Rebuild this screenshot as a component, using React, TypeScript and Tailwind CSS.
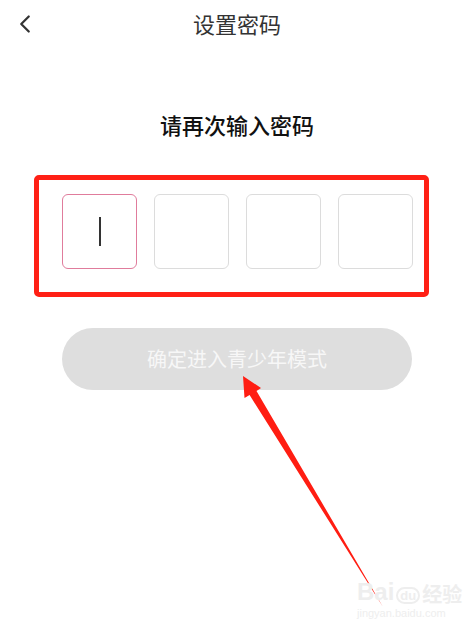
import { ChevronLeft } from "lucide-react";

const cjk = "font-['PingFang_SC','Noto_Sans_CJK_SC',sans-serif]";

const App = () => {
  const cells = [0, 1, 2, 3];

  return (
    <div className={`relative h-[632px] w-[474px] overflow-hidden bg-white ${cjk}`}>
      {/* Header */}
      <div className="relative flex h-[50px] items-center justify-center pb-[4px]">
        <ChevronLeft
          className="absolute left-[10px] top-[9px] h-[30px] w-[30px] text-[#333]"
          strokeWidth={1.8}
        />
        <span className="text-[22px] leading-[30px] text-[#333]">设置密码</span>
      </div>

      {/* Prompt */}
      <div className="mt-[59px] text-center text-[22px] font-medium leading-[30px] text-[#111]">
        请再次输入密码
      </div>

      {/* Code cells, highlighted */}
      <div className="ml-[34px] mt-[36px] w-[395px] rounded-[5px] border-[5px] border-[#ff2015] pb-[23px] pl-[23px] pt-[14px]">
        <div className="flex gap-[17px]">
          {cells.map((i) => (
            <div
              key={i}
              className={`flex h-[75px] w-[75px] items-center justify-center rounded-[6px] border ${
                i === 0 ? "border-[#e07c9c]" : "border-[#dcdcdc]"
              }`}
            >
              {i === 0 && <div className="h-[29px] w-[2px] bg-[#333]" />}
            </div>
          ))}
        </div>
      </div>

      {/* Confirm button */}
      <button
        type="button"
        className="ml-[62px] mt-[31px] flex h-[62px] w-[350px] items-center justify-center rounded-full bg-[#dedede] text-[20px] text-[#f7f7f7]"
      >
        确定进入青少年模式
      </button>

      {/* Annotation arrow */}
      <svg className="absolute left-0 top-0" width="474" height="632" viewBox="0 0 474 632">
        <polygon
          points="243,376 261,388 256.5,391 383,607 249.6,395 244.5,398"
          fill="#ff1d12"
        />
      </svg>

      {/* Watermark */}
      <div className="absolute left-[357px] top-[580px] font-['Liberation_Sans',sans-serif] leading-none text-[#eeeeee]">
        <div className="flex items-end gap-[2px] text-[24px] font-bold">
          <span>Bai</span>
          <span className="rounded-full border-2 border-[#eeeeee] px-[2px] text-[13px]">du</span>
          <span className={`${cjk} text-[20px]`}>经验</span>
        </div>
        <div className="mt-[4px] text-[11px]">jingyan.baidu.com</div>
      </div>
    </div>
  );
};

export default App;
